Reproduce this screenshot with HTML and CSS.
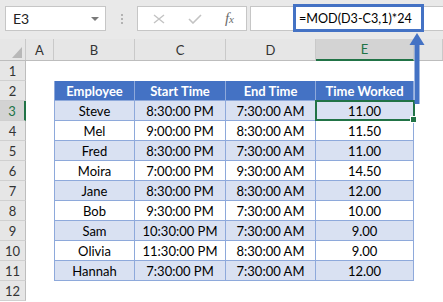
FILE: index.html
```html
<!DOCTYPE html>
<html lang="en">
<head>
    <meta charset="UTF-8">
    <title>Time Worked - MOD formula</title>
    <link rel="stylesheet" href="styles.css">
</head>
<body>
    <div class="toolbar">
        <div class="namebox">
            <span>E3</span>
            <svg class="caret" width="8" height="4" viewBox="0 0 8 4"><path d="M0 0H8L4 4Z" fill="#7a7a7a"/></svg>
        </div>
        <div class="grip"><i></i><i></i><i></i></div>
        <div class="fxbox">
            <svg width="12" height="10" viewBox="0 0 12 10"><path d="M1 1L11 9M11 1L1 9" stroke="#c3c3c3" stroke-width="1.4" fill="none"/></svg>
            <svg width="14" height="10" viewBox="0 0 14 10"><path d="M1 5L5 9L13 1" stroke="#c3c3c3" stroke-width="1.6" fill="none"/></svg>
            <span class="fx">f<small>x</small></span>
        </div>
        <div class="formula">=MOD(D3-C3,1)*24</div>
    </div>
    <div class="callout"></div>

    <div class="sheet">
        <div class="row head">
            <div class="corner"><svg width="10" height="11" viewBox="0 0 10 11"><path d="M10 0V11H0Z" fill="#b8b8b8"/></svg></div>
            <div class="col">A</div>
            <div class="col">B</div>
            <div class="col">C</div>
            <div class="col">D</div>
            <div class="col sel">E</div>
            <div class="col"></div>
        </div>
        <div class="row"><div class="num">1</div></div>
        <div class="row">
            <div class="num">2</div><div></div>
            <div class="th first">Employee</div><div class="th">Start Time</div><div class="th">End Time</div><div class="th">Time Worked</div>
        </div>
        <div class="row band">
            <div class="num sel">3</div><div></div>
            <div class="td first">Steve</div><div class="td">8:30:00 PM</div><div class="td">7:30:00 AM</div><div class="td active">11.00</div>
        </div>
        <div class="row">
            <div class="num">4</div><div></div>
            <div class="td first">Mel</div><div class="td">9:00:00 PM</div><div class="td">8:30:00 AM</div><div class="td">11.50</div>
        </div>
        <div class="row band">
            <div class="num">5</div><div></div>
            <div class="td first">Fred</div><div class="td">8:30:00 PM</div><div class="td">7:30:00 AM</div><div class="td">11.00</div>
        </div>
        <div class="row">
            <div class="num">6</div><div></div>
            <div class="td first">Moira</div><div class="td">7:00:00 PM</div><div class="td">9:30:00 AM</div><div class="td">14.50</div>
        </div>
        <div class="row band">
            <div class="num">7</div><div></div>
            <div class="td first">Jane</div><div class="td">8:30:00 PM</div><div class="td">8:30:00 AM</div><div class="td">12.00</div>
        </div>
        <div class="row">
            <div class="num">8</div><div></div>
            <div class="td first">Bob</div><div class="td">9:30:00 PM</div><div class="td">7:30:00 AM</div><div class="td">10.00</div>
        </div>
        <div class="row band">
            <div class="num">9</div><div></div>
            <div class="td first">Sam</div><div class="td">10:30:00 PM</div><div class="td">7:30:00 AM</div><div class="td">9.00</div>
        </div>
        <div class="row">
            <div class="num">10</div><div></div>
            <div class="td first">Olivia</div><div class="td">11:30:00 PM</div><div class="td">8:30:00 AM</div><div class="td">9.00</div>
        </div>
        <div class="row band">
            <div class="num">11</div><div></div>
            <div class="td first">Hannah</div><div class="td">7:30:00 PM</div><div class="td">7:30:00 AM</div><div class="td">12.00</div>
        </div>
        <div class="row"><div class="num">12</div></div>
    </div>

    <svg class="arrow" width="16" height="72" viewBox="0 0 16 72">
        <path d="M0.5 12H15.5L8 0Z" fill="#4472c4"/>
        <rect x="5.5" y="11" width="5" height="60" fill="#4472c4"/>
    </svg>
</body>
</html>
```

FILE: styles.css
```css
body {
    margin: 0;
    width: 443px;
    height: 302px;
    overflow: hidden;
    background: #fff;
    font-family: Lato, "Open Sans", sans-serif;
    color: #000;
}

.toolbar {
    display: flex;
    align-items: center;
    height: 39px;
    padding-left: 5px;
    background: #e9e9e9;
    box-sizing: border-box;
    padding-bottom: 2px;
}
.namebox, .fxbox, .formula {
    height: 25px;
    background: #fff;
    border: 1px solid #c6c6c6;
    box-sizing: border-box;
    display: flex;
    align-items: center;
}
.namebox {
    width: 101px;
    padding: 0 6px 0 7px;
    justify-content: space-between;
    font-size: 14px;
    color: #222;
}
.grip {
    width: 31px;
    display: flex;
    flex-direction: column;
    align-items: center;
    gap: 2px;
}
.grip i {
    width: 2px;
    height: 2px;
    background: #b3b3b3;
}
.fxbox {
    width: 110px;
    padding: 0 12px 0 15px;
    justify-content: space-between;
}
.fx {
    font-family: "Liberation Serif", serif;
    font-style: italic;
    font-size: 15px;
    color: #6b6b6b;
}
.fx small {
    font-size: 11px;
}
.formula {
    flex: 1;
    margin-left: 3px;
    margin-right: -2px;
    padding-left: 48px;
    font-size: 12.6px;
}

/* blue frame over the formula text */
.callout {
    position: absolute;
    left: 293px;
    top: 4px;
    width: 131px;
    height: 28px;
    border: 3px solid #4472c4;
    box-sizing: border-box;
}
.arrow {
    position: absolute;
    left: 409px;
    top: 33px;
}

.sheet {
    font-size: 13px;
}
.row {
    display: grid;
    grid-template-columns: 26px 28px 81px 91px 90px 98px 1fr;
    height: 20px;
}
.row > div {
    display: flex;
    align-items: center;
    justify-content: center;
    box-sizing: border-box;
}
.row.head {
    height: 22px;
    background: #e6e6e6;
    border-bottom: 1px solid #bdbdbd;
    box-sizing: border-box;
    color: #333;
}
.corner {
    border-right: 1px solid #c9c9c9;
}
.row > .corner {
    align-items: flex-end;
    justify-content: flex-end;
    padding: 0 3px 2px 0;
}
.col {
    border-right: 1px solid #c9c9c9;
}
.col.sel {
    background: #d3d3d3;
    color: #217346;
    border-bottom: 2px solid #217346;
    margin-bottom: -1px;
}
.num {
    background: #e6e6e6;
    border-right: 1px solid #bdbdbd;
    border-bottom: 1px solid #d0d0d0;
    color: #333;
}
.num.sel {
    background: #d3d3d3;
    color: #217346;
    border-right: 2px solid #217346;
}

.th, .td {
    border-right: 1px solid #8ea9db;
    border-bottom: 1px solid #8ea9db;
}
.th {
    background: #4472c4;
    color: #fff;
    font-weight: bold;
}
.first {
    border-left: 1px solid #8ea9db;
}
.band .td {
    background: #d9e1f2;
}
.td.active {
    position: relative;
}
.td.active::after {
    content: "";
    position: absolute;
    top: -1px;
    left: -1px;
    right: -2px;
    bottom: -1px;
    border: 2px solid #217346;
}
.td.active::before {
    content: "";
    position: absolute;
    right: -4px;
    bottom: -3px;
    width: 5px;
    height: 5px;
    background: #217346;
    border: 1px solid #fff;
    z-index: 1;
}
```
